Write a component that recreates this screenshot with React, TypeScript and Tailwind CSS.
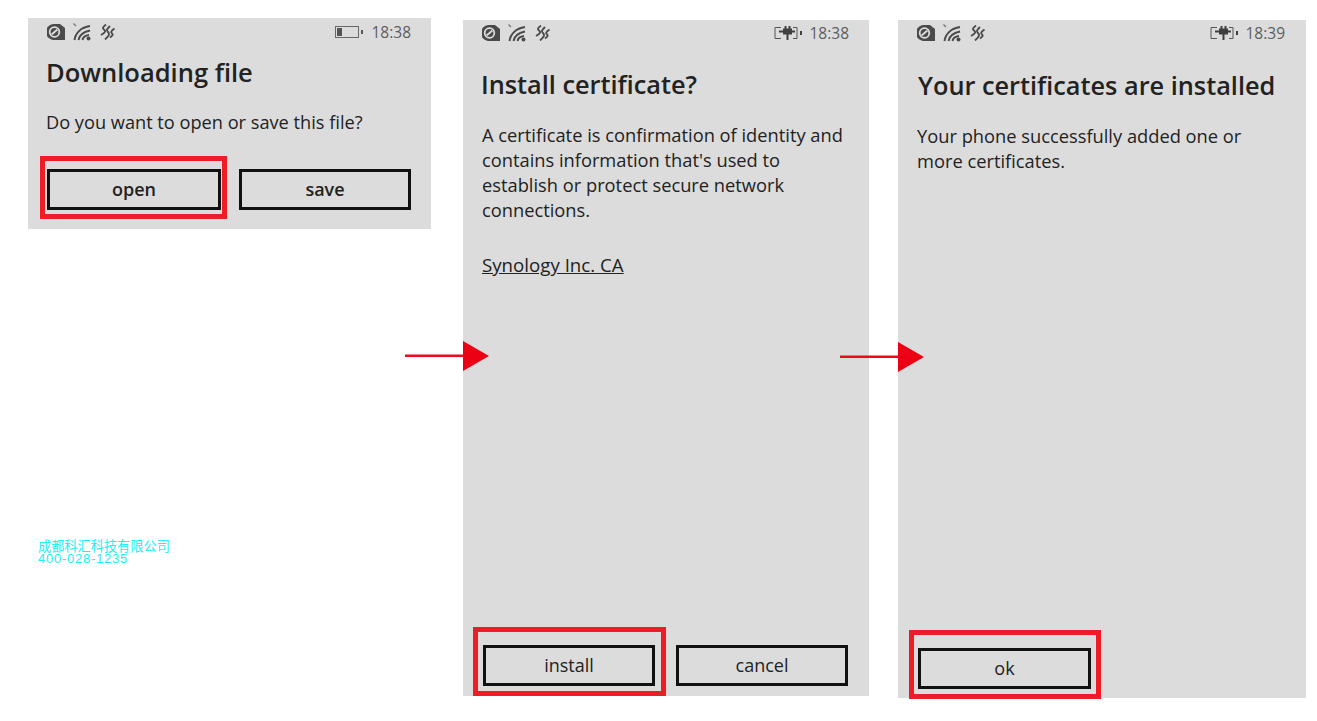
import React from 'react';

const font = '[font-family:"Open_Sans","Noto_Sans",sans-serif]';

function StatusIcons() {
  return (
    <div className="flex items-center text-[#4a4a4a]">
      {/* sim / vibrate */}
      <svg width="18" height="16" viewBox="0 0 18 16">
        <path d="M6 0h7l5 4v12H8A8 8 0 0 1 6 0z" fill="currentColor" />
        <circle cx="7.500" cy="8" r="4.800" fill="none" stroke="#dcdcdc" strokeWidth="1.800" />
        <path d="M4.600 10.500 10.400 5.500" stroke="#dcdcdc" strokeWidth="1.800" />
      </svg>
      {/* wifi */}
      <svg width="18" height="18" viewBox="0 0 18 18" fill="none" stroke="currentColor" className="ml-[8px]">
        <path d="M0.500 0.500l2.500 2.500" strokeWidth="1.200" opacity="0.7" />
        <path d="M1.500 17C2.500 10 8 4.500 17 3" strokeWidth="2" />
        <path d="M5.500 17c.8-5 4.500-8 11.500-9.500" strokeWidth="2" />
        <path d="M9.500 17c.5-2.500 2.500-4.500 6.500-5" strokeWidth="2" />
        <circle cx="15.500" cy="15.500" r="2" fill="currentColor" stroke="none" />
      </svg>
      {/* data */}
      <svg width="15" height="16" viewBox="0 0 15 16" fill="none" stroke="currentColor" strokeWidth="1.800" className="ml-[9px]">
        <path d="M6 0.500C3 3 2 4 4 5.500S6 8 1 11" />
        <path d="M10 2C7 5 6 6 8 8s1 4-3 7.500" />
        <path d="M14.500 4.500C11 7 10.500 8 12 9.500s.5 2-2 4" />
      </svg>
    </div>
  );
}

function Battery() {
  return (
    <svg width="28" height="12" viewBox="0 0 28 12" className="mr-[8px]">
      <rect x="0.500" y="0.500" width="23" height="11" fill="none" stroke="#666" />
      <rect x="2" y="2" width="5" height="8" fill="#555" />
      <rect x="26" y="4" width="2" height="4" fill="#555" />
    </svg>
  );
}

function Plug() {
  return (
    <svg width="28" height="14" viewBox="0 0 28 14" className="mr-[7px]" fill="#3f3f3f">
      <path d="M7 1.500H1v11h6M19 1.500h4v11h-4" fill="none" stroke="#555" />
      <rect x="9" y="2.500" width="9" height="6" />
      <rect x="5" y="4.500" width="4" height="2" />
      <rect x="18" y="4.500" width="3" height="2" />
      <rect x="10.500" y="0" width="2" height="3" />
      <rect x="14.500" y="0" width="2" height="3" />
      <rect x="12.500" y="8" width="2" height="6" />
      <rect x="26" y="5" width="2" height="4" />
    </svg>
  );
}

function StatusBar({ time, plug, className }: { time: string; plug?: boolean; className: string }) {
  return (
    <div className={`flex items-center ${className}`}>
      <StatusIcons />
      <div className="ml-auto flex items-center">
        {plug ? <Plug /> : <Battery />}
        <span className="pt-[2px] text-[15.500px] text-[#5c5c5c]">{time}</span>
      </div>
    </div>
  );
}

function Btn({ label, width = 'w-[172px]', weight = 'font-medium' }: { label: string; width?: string; weight?: string }) {
  return (
    <div className={`${width} ${weight} h-[41px] shrink-0 border-[3px] border-[#111] flex items-center justify-center text-[18px] text-[#222]`}>
      {label}
    </div>
  );
}

function Arrow({ top }: { top: string }) {
  return (
    <svg width="84" height="30" viewBox="0 0 84 30" className={`absolute left-[-58px] ${top}`}>
      <rect x="0" y="13.500" width="58" height="2.500" fill="#ec0a1c" />
      <path d="M58 0l26 15-26 15z" fill="#ec0014" />
    </svg>
  );
}

export default function App() {
  return (
    <div className={`w-[1317px] h-[721px] bg-white flex overflow-hidden ${font}`}>
      {/* first phone */}
      <div className="w-[403px] ml-[28px] mt-[18px] shrink-0">
        <div className="bg-[#dcdcdc] h-[211px]">
          <StatusBar time="18:38" className="pl-[19px] pr-[20px] h-[28px]" />
          <h1 className="ml-[18px] mt-[9px] text-[25.500px] leading-[34px] font-semibold text-[#222]">Downloading file</h1>
          <p className="ml-[18px] mt-[21px] text-[18.200px] leading-[24px] text-[#222]">Do you want to open or save this file?</p>
          <div className="flex items-start ml-[12px] mt-[22px]">
            <div className="w-[187px] h-[63px] border-[5px] border-[#ee1c25] pl-[2px] pt-[8px]">
              <Btn label="open" width="w-[174px]" weight="font-semibold" />
            </div>
            <div className="ml-[12px] mt-[13px]">
              <Btn label="save" weight="font-semibold" />
            </div>
          </div>
        </div>
        <div className="ml-[10px] mt-[310px] leading-[13px] text-[#22f0f5]">
          <div className="text-[13.200px] [font-family:'Noto_Sans_CJK_SC','Liberation_Sans',sans-serif]">成都科汇科技有限公司</div>
          <div className="text-[13px] tracking-[0.750px] [font-family:'Liberation_Sans',sans-serif]">400-028-1235</div>
        </div>
      </div>

      {/* second phone */}
      <div className="relative w-[406px] ml-[32px] mt-[20px] h-[676px] shrink-0 bg-[#dcdcdc] flex flex-col">
        <Arrow top="top-[321px]" />
        <StatusBar time="18:38" plug className="pl-[19px] pr-[20px] h-[26px]" />
        <h1 className="ml-[18px] mt-[21px] text-[25.300px] leading-[34px] font-semibold text-[#222]">Install certificate?</h1>
        <p className="ml-[19px] mt-[21px] w-[375px] text-[18.300px] leading-[25px] text-[#222]">
          A certificate is confirmation of identity and contains information that's used to establish or protect secure network connections.
        </p>
        <a className="ml-[19px] mt-[30px] text-[18.700px] leading-[25px] text-[#222] underline">Synology Inc. CA</a>
        <div className="mt-auto flex items-start ml-[10px]">
          <div className="w-[193px] h-[69px] border-[5px] border-[#ee1c25] pl-[5px] pt-[13px]">
            <Btn label="install" />
          </div>
          <div className="ml-[10px] mt-[18px]">
            <Btn label="cancel" />
          </div>
        </div>
      </div>

      {/* third phone */}
      <div className="relative w-[408px] ml-[29px] mt-[20px] h-[678px] shrink-0 bg-[#dcdcdc] flex flex-col">
        <Arrow top="top-[322px]" />
        <StatusBar time="18:39" plug className="pl-[19px] pr-[21px] h-[26px]" />
        <h1 className="ml-[20px] mt-[22px] text-[25.300px] leading-[34px] font-semibold text-[#222]">Your certificates are installed</h1>
        <p className="ml-[19px] mt-[21px] w-[340px] text-[18.300px] leading-[25px] text-[#222]">
          Your phone successfully added one or more certificates.
        </p>
        <div className="mt-auto ml-[11px] w-[192px] h-[69px] border-[5px] border-[#ee1c25] pl-[4px] pt-[13px] -mb-[1px]">
          <Btn label="ok" width="w-[173px]" />
        </div>
      </div>
    </div>
  );
}
